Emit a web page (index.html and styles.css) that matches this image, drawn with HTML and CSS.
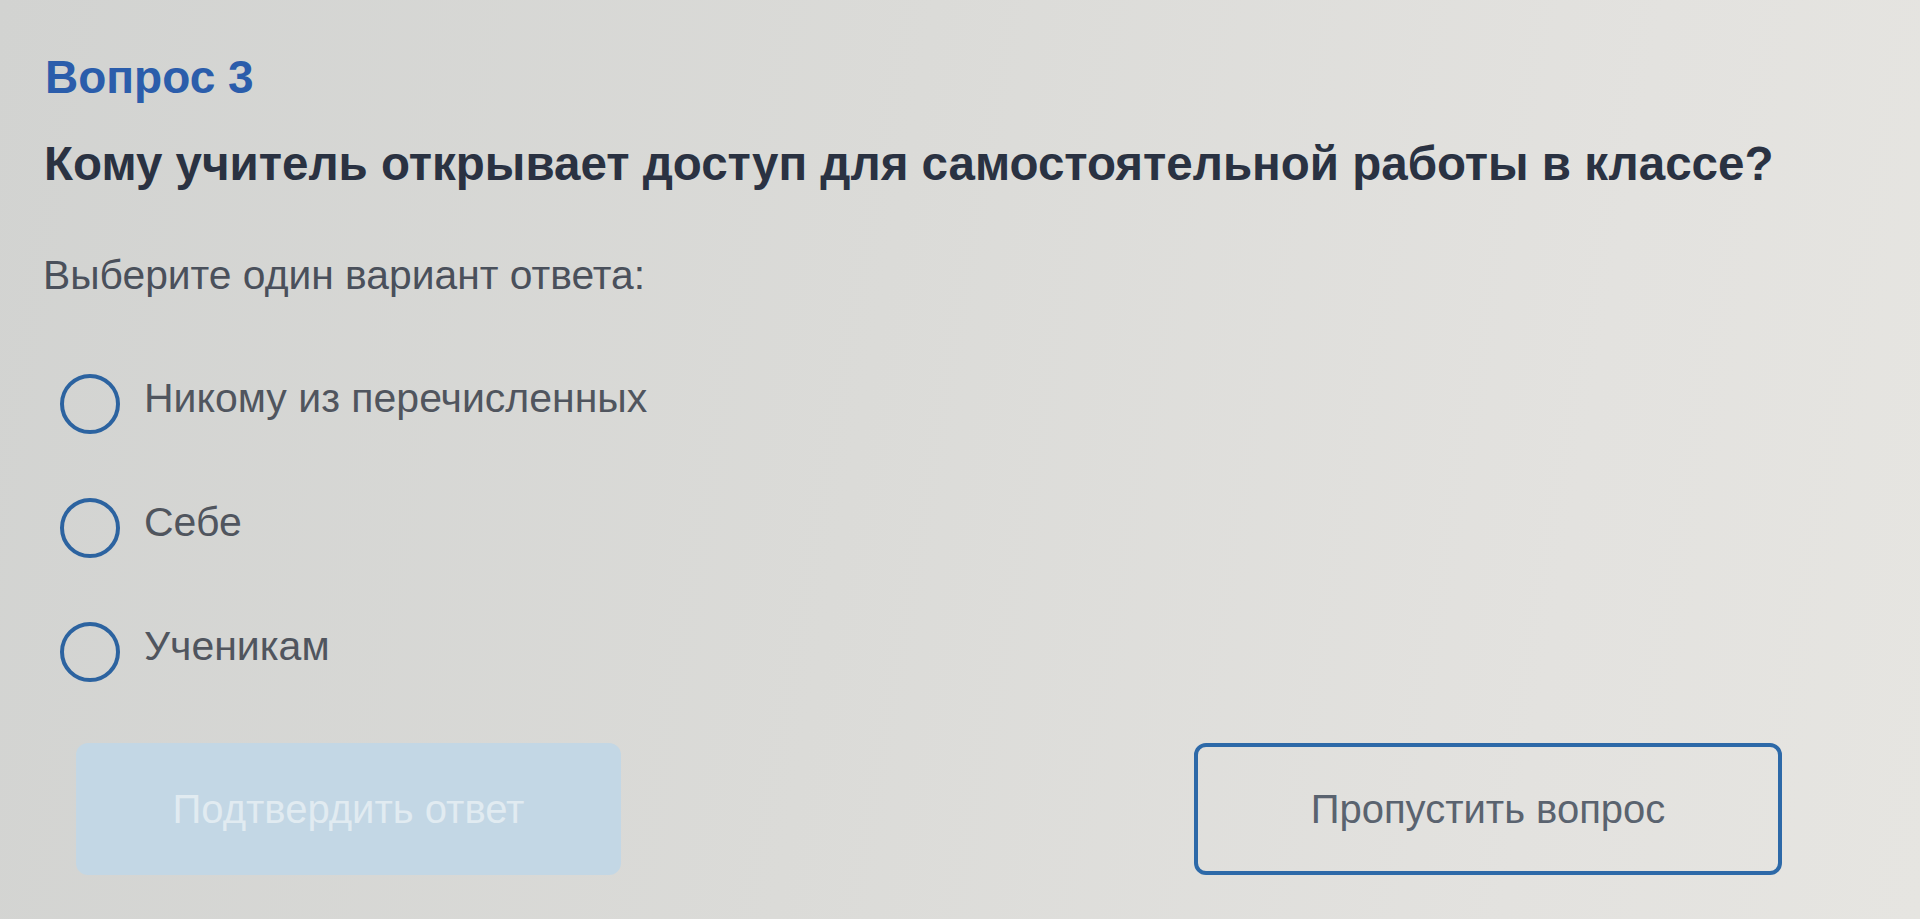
FILE: index.html
```html
<!DOCTYPE html>
<html lang="ru">
<head>
<meta charset="utf-8">
<title>Вопрос 3</title>
<link rel="stylesheet" href="styles.css">
</head>
<body>
<main class="quiz">
  <h1 class="quiz-num">Вопрос 3</h1>
  <h2 class="quiz-question">Кому учитель открывает доступ для самостоятельной работы в классе?</h2>
  <p class="quiz-hint">Выберите один вариант ответа:</p>
  <ul class="options">
    <li class="option"><span class="radio"></span><span class="option-text">Никому из перечисленных</span></li>
    <li class="option"><span class="radio"></span><span class="option-text">Себе</span></li>
    <li class="option"><span class="radio"></span><span class="option-text">Ученикам</span></li>
  </ul>
  <div class="actions">
    <button class="btn btn-confirm" disabled>Подтвердить ответ</button>
    <button class="btn btn-skip">Пропустить вопрос</button>
  </div>
</main>
</body>
</html>
```
FILE: styles.css
```css
html, body {
  margin: 0;
  padding: 0;
  height: 100%;
}
body {
  background: linear-gradient(100deg, #d2d3d1 0%, #dbdbd8 45%, #e3e2df 80%, #e6e5e1 100%);
  font-family: "Liberation Sans", Arial, sans-serif;
  overflow: hidden;
}
.quiz {
  padding: 49px 0 0 45px;
}
.quiz-num {
  margin: 0;
  font-size: 46px;
  line-height: 56px;
  font-weight: 700;
  color: #2b5dab;
}
.quiz-question {
  margin: 30px 0 0 -1px;
  font-size: 47.5px;
  line-height: 58px;
  font-weight: 700;
  color: #2a3242;
  white-space: nowrap;
}
.quiz-hint {
  margin: 58px 0 0 -2px;
  font-size: 40.8px;
  line-height: 48px;
  color: #4a505b;
}
.options {
  list-style: none;
  margin: 76px 0 0 0;
  padding: 0 0 0 15px;
  display: flex;
  flex-direction: column;
  gap: 66px;
}
.option {
  display: flex;
  align-items: center;
  gap: 24px;
  height: 58px;
}
.radio {
  width: 52px;
  height: 52px;
  border: 4px solid #2c63a0;
  border-radius: 50%;
  flex: none;
}
.option-text {
  font-size: 41px;
  line-height: 48px;
  color: #50555e;
  margin-top: -12px;
}
.actions {
  margin: 62px 0 0 31px;
  width: 1706px;
  display: flex;
  justify-content: space-between;
}
.btn {
  height: 132px;
  border-radius: 12px;
  font-family: "Liberation Sans", Arial, sans-serif;
  font-size: 40px;
  padding: 0;
}
.btn-confirm {
  width: 545px;
  background: #c3d7e5;
  border: none;
  color: #e1ebf1;
}
.btn-skip {
  width: 588px;
  background: transparent;
  border: 4px solid #2d69a8;
  color: #5a636f;
}
```
